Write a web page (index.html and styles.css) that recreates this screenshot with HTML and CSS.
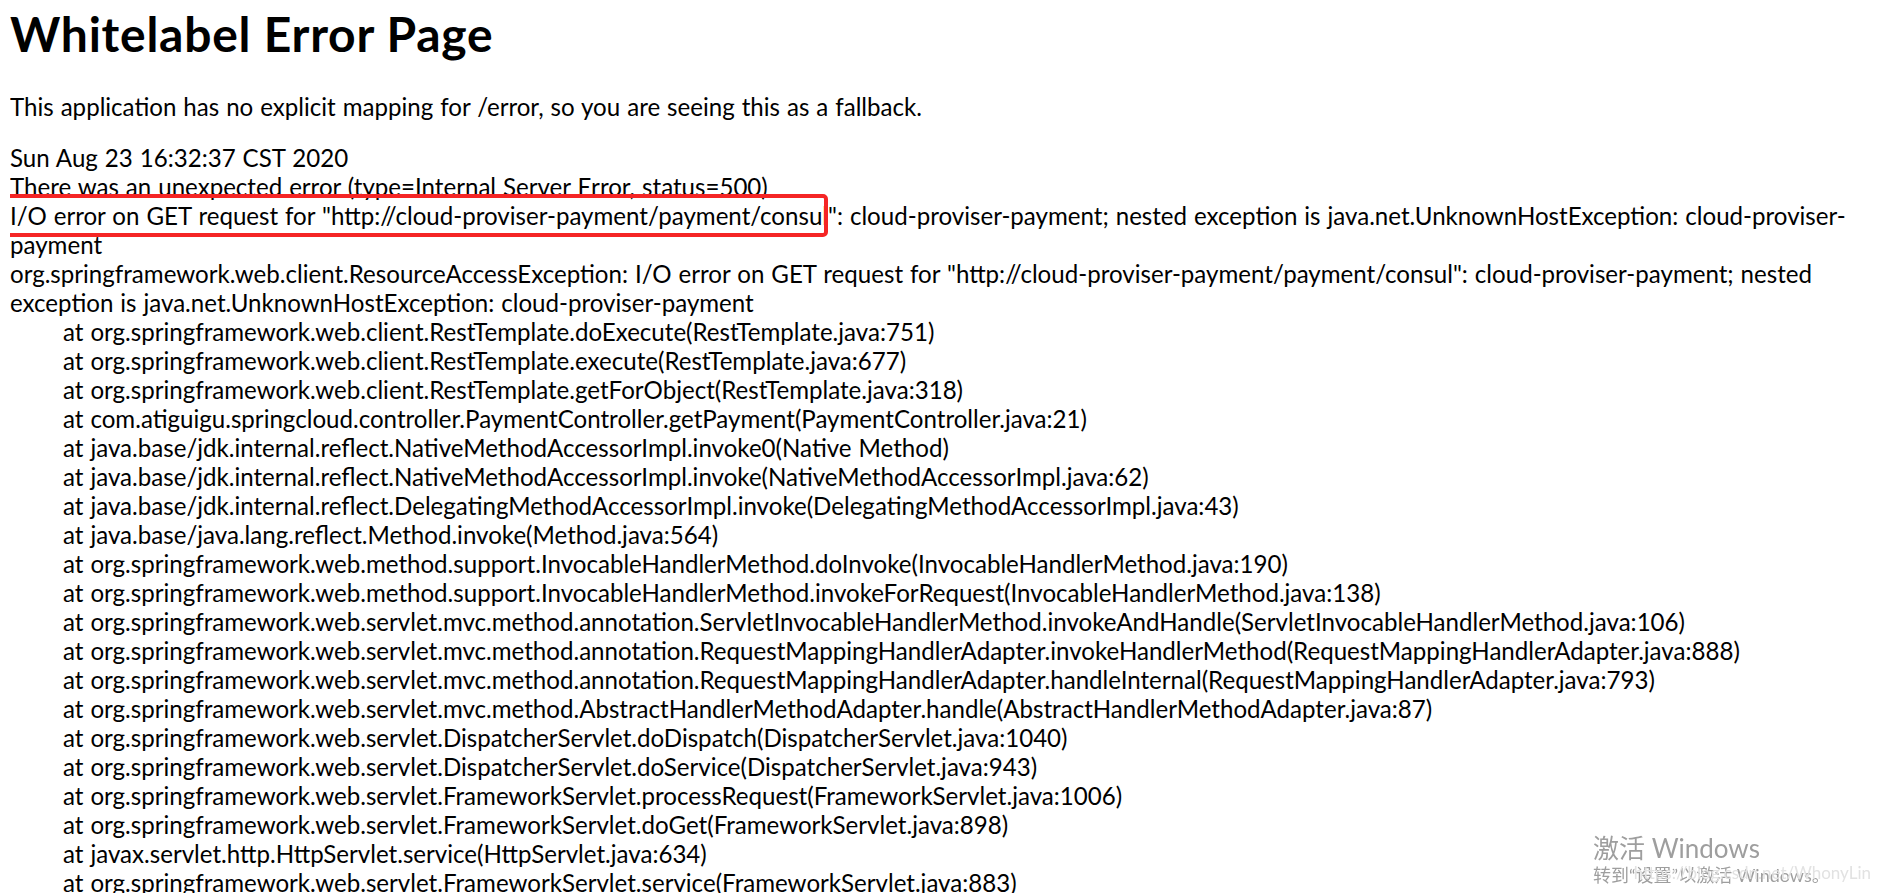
FILE: index.html
```html
<!DOCTYPE html>
<html lang="en">
<head>
  <meta charset="UTF-8">
  <meta name="viewport" content="width=device-width, initial-scale=1.0">
  <title>Error</title>
  <link rel="stylesheet" href="styles.css">
</head>
<body>
  <h1>Whitelabel Error Page</h1>
  <p class="intro">This application has no explicit mapping for /error, so you are seeing this as a fallback.</p>
  <div id="created">Sun Aug 23 16:32:37 CST 2020</div>
  <div>There was an unexpected error (type=Internal Server Error, status=500)</div>
  <div><span class="marked">I/O error on GET request for &quot;http://cloud-proviser-payment/payment/consul</span>&quot;: cloud-proviser-payment; nested exception is java.net.UnknownHostException: cloud-proviser-payment</div>
  <div class="trace">org.springframework.web.client.ResourceAccessException: I/O error on GET request for &quot;http://cloud-proviser-payment/payment/consul&quot;: cloud-proviser-payment; nested exception is java.net.UnknownHostException: cloud-proviser-payment
	at org.springframework.web.client.RestTemplate.doExecute(RestTemplate.java:751)
	at org.springframework.web.client.RestTemplate.execute(RestTemplate.java:677)
	at org.springframework.web.client.RestTemplate.getForObject(RestTemplate.java:318)
	at com.atiguigu.springcloud.controller.PaymentController.getPayment(PaymentController.java:21)
	at java.base/jdk.internal.reflect.NativeMethodAccessorImpl.invoke0(Native Method)
	at java.base/jdk.internal.reflect.NativeMethodAccessorImpl.invoke(NativeMethodAccessorImpl.java:62)
	at java.base/jdk.internal.reflect.DelegatingMethodAccessorImpl.invoke(DelegatingMethodAccessorImpl.java:43)
	at java.base/java.lang.reflect.Method.invoke(Method.java:564)
	at org.springframework.web.method.support.InvocableHandlerMethod.doInvoke(InvocableHandlerMethod.java:190)
	at org.springframework.web.method.support.InvocableHandlerMethod.invokeForRequest(InvocableHandlerMethod.java:138)
	at org.springframework.web.servlet.mvc.method.annotation.ServletInvocableHandlerMethod.invokeAndHandle(ServletInvocableHandlerMethod.java:106)
	at org.springframework.web.servlet.mvc.method.annotation.RequestMappingHandlerAdapter.invokeHandlerMethod(RequestMappingHandlerAdapter.java:888)
	at org.springframework.web.servlet.mvc.method.annotation.RequestMappingHandlerAdapter.handleInternal(RequestMappingHandlerAdapter.java:793)
	at org.springframework.web.servlet.mvc.method.AbstractHandlerMethodAdapter.handle(AbstractHandlerMethodAdapter.java:87)
	at org.springframework.web.servlet.DispatcherServlet.doDispatch(DispatcherServlet.java:1040)
	at org.springframework.web.servlet.DispatcherServlet.doService(DispatcherServlet.java:943)
	at org.springframework.web.servlet.FrameworkServlet.processRequest(FrameworkServlet.java:1006)
	at org.springframework.web.servlet.FrameworkServlet.doGet(FrameworkServlet.java:898)
	at javax.servlet.http.HttpServlet.service(HttpServlet.java:634)
	at org.springframework.web.servlet.FrameworkServlet.service(FrameworkServlet.java:883)
	at javax.servlet.http.HttpServlet.service(HttpServlet.java:741)
</div>

  <div class="activate">
    <div class="activate-title">激活 Windows</div>
    <div class="activate-sub">转到“设置”以激活 Windows。</div>
  </div>
  <div class="blog-mark">https://blog.csdn.net/WhonyLin</div>
</body>
</html>
```

FILE: styles.css
```css
body {
  margin: 0 10px;
  font-family: "Lato", "Noto Sans CJK SC", sans-serif;
  font-size: 24.1px;
  line-height: 29px;
  word-spacing: 0.8px;
  color: #000;
  background: #fff;
}
h1 {
  margin: 6px 0 0;
  font-size: 48px;
  line-height: 55px;
  font-weight: bold;
  letter-spacing: 0.75px;
  word-spacing: 0;
}
.intro {
  margin: 31px 0 22px;
}
.trace {
  white-space: pre-wrap;
  tab-size: 53px;
}

/* red box drawn over the screenshot */
.marked {
  position: relative;
}
.marked::after {
  content: "";
  position: absolute;
  left: -9px;
  right: 0;
  top: -7px;
  bottom: -7px;
  border: 4px solid #f52525;
  border-radius: 5px;
}

/* watermarks */
.activate {
  position: fixed;
  left: 1593px;
  bottom: 6px;
  color: #9e9e9e;
  font-family: "Lato", "Noto Sans CJK SC", sans-serif;
  word-spacing: 0;
}
.activate-title {
  font-size: 26px;
  line-height: 29px;
}
.activate-sub {
  font-size: 18px;
  line-height: 24px;
}
.blog-mark {
  position: fixed;
  right: 8px;
  bottom: 8px;
  color: #e2e2e2;
  font-size: 17px;
  line-height: 24px;
  word-spacing: 0;
}
```
